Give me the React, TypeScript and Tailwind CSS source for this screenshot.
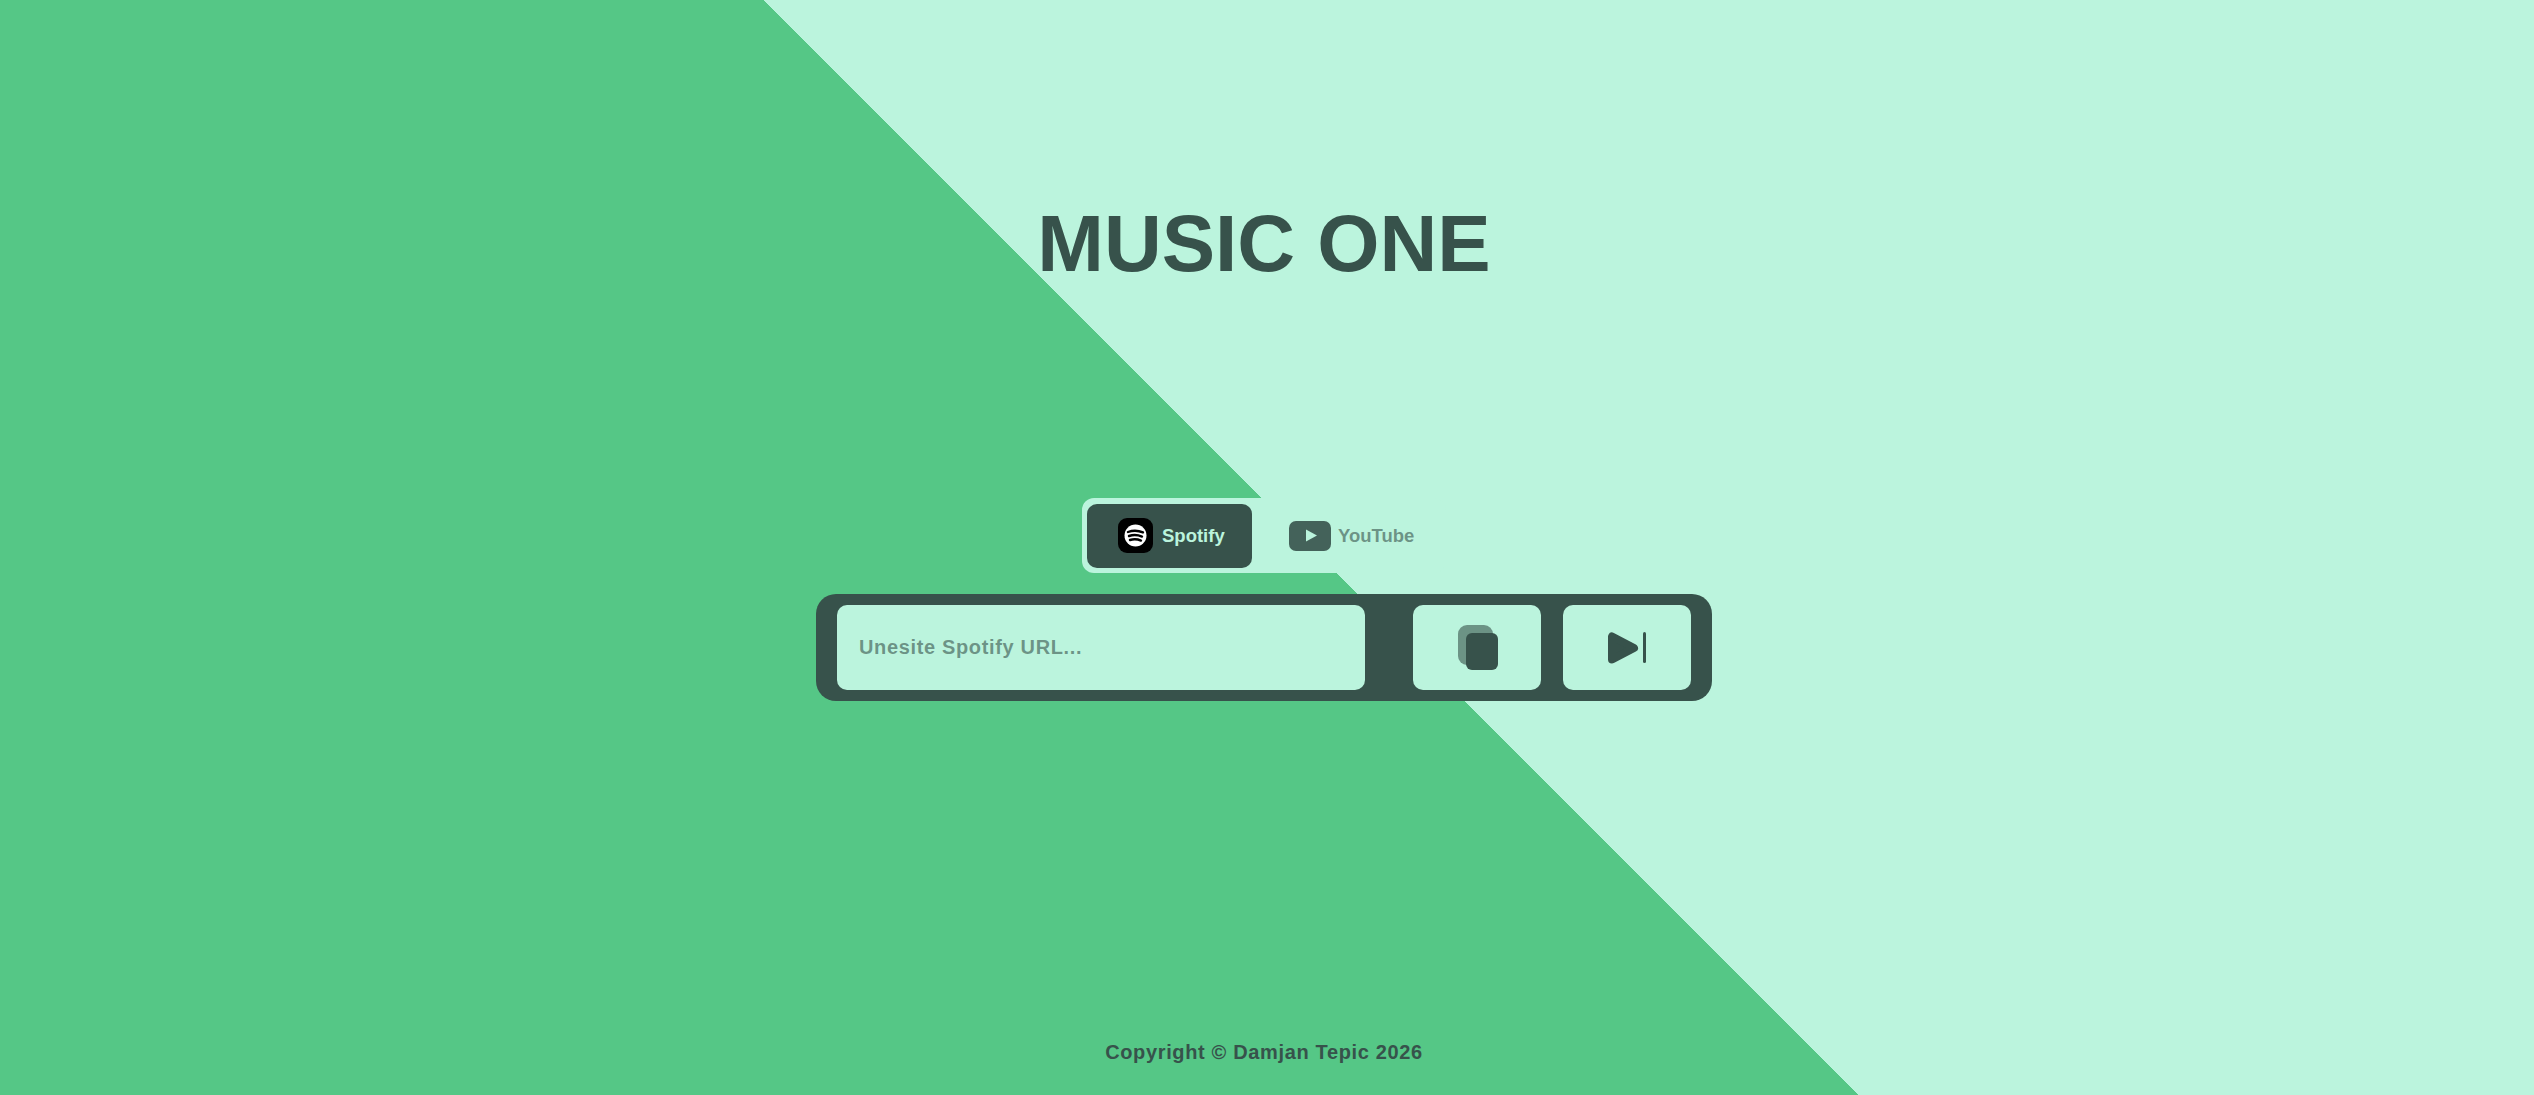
export default function App() {
  return (
    <div className="w-full h-[1095px] overflow-hidden flex flex-col items-center pr-[6px] font-['Liberation_Sans',Arial,sans-serif] font-bold text-[#37524b] bg-[linear-gradient(45deg,#55c786_51.2%,#bbf4dd_51.2%)]">
      <h1 className="mt-[198px] text-[80px] leading-[92px]">MUSIC ONE</h1>
      <div className="mt-[208px] w-[364px] h-[75px] rounded-[12px] bg-[#bbf4dd] flex items-center gap-[10px] px-[5px]">
        <button className="w-[165px] h-[64px] rounded-[10px] bg-[#37524b] text-[#bbf4dd] text-[18.5px] flex items-center justify-start pl-[31px] gap-[9px]">
          <svg width="35" height="35" viewBox="0 0 35 35" fill="none">
            <rect width="35" height="35" rx="9" fill="#000" />
            <circle cx="17.5" cy="17.5" r="11" fill="#fff" />
            <path d="M10 14Q17.5 11.2 25 14.4M11 18Q17.5 15.8 24 18.6M12 22Q17.5 20.2 23 22.6" stroke="#000" strokeWidth="2.4" strokeLinecap="round" />
          </svg>
          Spotify
        </button>
        <button className="h-[64px] ml-[27px] text-[18.5px] flex items-center gap-[7px] text-[#37524b]/60">
          <svg width="42" height="30" viewBox="0 0 42 30">
            <rect width="42" height="30" rx="7" fill="#37524b" fillOpacity="0.9" />
            <path d="M17 8.5V20.5L28 14.5Z" fill="#bbf4dd" />
          </svg>
          YouTube
        </button>
      </div>
      <div className="mt-[21px] w-[896px] h-[107px] rounded-[20px] bg-[#37524b] flex items-center px-[21px]">
        <input
          placeholder="Unesite Spotify URL..."
          className="w-[528px] h-[85px] rounded-[10px] bg-[#bbf4dd] px-[22px] text-[20px] font-bold tracking-[0.65px] outline-none placeholder:text-[#37524b]/60"
        />
        <button className="ml-[48px] w-[128px] h-[85px] rounded-[10px] bg-[#bbf4dd] flex items-center justify-center pl-[2px]">
          <svg width="40" height="45" viewBox="0 0 40 45">
            <rect x="0" y="0" width="35" height="40" rx="9" fill="#37524b" fillOpacity="0.6" />
            <rect x="8" y="8" width="32" height="37" rx="6" fill="#37524b" />
          </svg>
        </button>
        <button className="ml-[22px] w-[128px] h-[85px] rounded-[10px] bg-[#bbf4dd] flex items-center justify-center">
          <svg width="38" height="32" viewBox="0 0 38 32">
            <path d="M4 4.5V27.5L26 16Z" fill="#37524b" stroke="#37524b" strokeWidth="8" strokeLinejoin="round" />
            <rect x="35" y="0" width="3" height="31" rx="1.5" fill="#37524b" />
          </svg>
        </button>
      </div>
      <footer className="mt-auto mb-[31px] text-[20px] leading-[23px] tracking-[0.65px]">Copyright © Damjan Tepic 2026</footer>
    </div>
  );
}
